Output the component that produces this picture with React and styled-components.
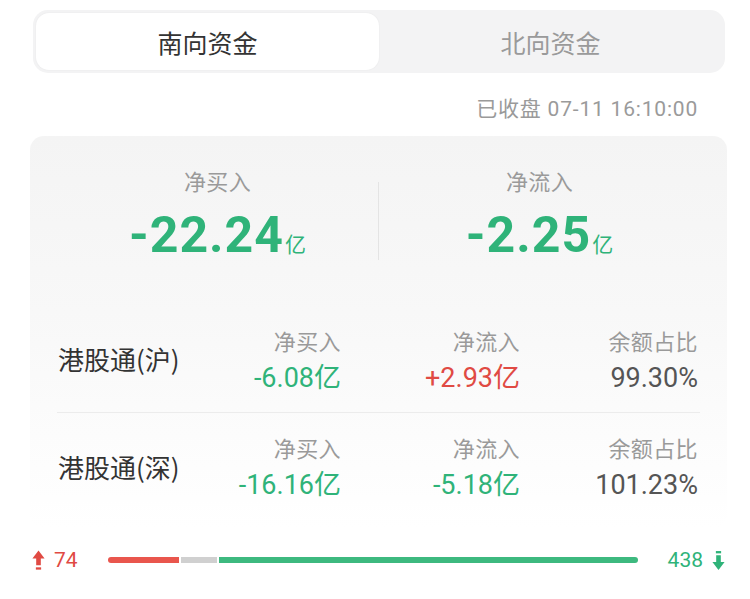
import React from "react";
import styled, { createGlobalStyle } from "styled-components";

const GREEN = "#2fb379";
const RED = "#e04a43";

const Global = createGlobalStyle`
  html, body { margin: 0; padding: 0; background: #fff; }
  body { font-family: Roboto, "Noto Sans CJK SC", sans-serif; }
`;

const Page = styled.div`
  width: 750px;
  height: 599px;
  box-sizing: border-box;
  padding: 10px 23px 0 30px;
  display: flex;
  flex-direction: column;
  overflow: hidden;
`;

const Tabs = styled.div`
  margin: 0 2px 0 3px;
  height: 63px;
  box-sizing: border-box;
  padding: 3px;
  border-radius: 15px;
  background: #f3f3f4;
  display: flex;
`;

const Tab = styled.div`
  flex: 1;
  display: flex;
  align-items: center;
  justify-content: center;
  border-radius: 13px;
  font-family: "Noto Sans CJK SC", sans-serif;
  font-size: 25px;
  color: ${(p) => (p.$active ? "#333" : "#9a9a9a")};
  background: ${(p) => (p.$active ? "#fff" : "transparent")};
  box-shadow: ${(p) => (p.$active ? "0 0 2px rgba(0,0,0,0.06)" : "none")};
`;

const Stamp = styled.div`
  margin-top: 21px;
  padding-right: 29px;
  text-align: right;
  font-size: 21px;
  line-height: 30px;
  letter-spacing: 0.8px;
  color: #9a9a9a;
  font-family: Roboto, "Noto Sans CJK SC", sans-serif;
`;

const Card = styled.div`
  margin-top: 12px;
  border-radius: 14px;
  background: linear-gradient(180deg, #f4f4f4 0%, #f8f8f8 45%, #ffffff 100%);
  padding: 0 27px;
  height: 393px;
  box-sizing: border-box;
`;

const Summary = styled.div`
  display: flex;
  align-items: center;
  padding: 29px 0 42px;
`;

const SumCol = styled.div`
  flex: 1;
  display: flex;
  flex-direction: column;
  align-items: center;
`;

const VDivider = styled.div`
  width: 1px;
  height: 78px;
  background: #e4e4e4;
  margin-top: 14px;
`;

const Label = styled.div`
  font-family: "Noto Sans CJK SC", sans-serif;
  font-size: 22px;
  line-height: 30px;
  letter-spacing: 0.4px;
  color: #9a9a9a;
`;

const BigNum = styled.div`
  margin-top: 12px;
  font-family: Roboto, sans-serif;
  font-weight: 700;
  font-size: 50px;
  line-height: 56px;
  letter-spacing: 1px;
  color: ${GREEN};
  span {
    font-family: "Noto Sans CJK SC", sans-serif;
    font-weight: 400;
    font-size: 21px;
    line-height: 1;
    letter-spacing: 0;
    margin-left: 1px;
  }
`;

const Row = styled.div`
  display: grid;
  grid-template-columns: minmax(0, 1fr) 179px 179px 178px;
  align-items: center;
  height: 107px;
  box-sizing: border-box;
  padding: 0 2px 0 1px;
  border-top: ${(p) => (p.$divider ? "1px solid #ececec" : "none")};
`;

const Name = styled.div`
  font-family: "Noto Sans CJK SC", sans-serif;
  font-size: 26px;
  color: #333;
  white-space: nowrap;
`;

const Cell = styled.div`
  display: flex;
  flex-direction: column;
  align-items: flex-end;
  gap: 8px;
`;

const Value = styled.div`
  font-family: Roboto, "Noto Sans CJK SC", sans-serif;
  font-size: 27px;
  line-height: 30px;
  white-space: nowrap;
  color: ${(p) => p.$color};
`;

const BarRow = styled.div`
  display: flex;
  align-items: center;
  margin-top: 17px;
  padding: 0 2px 0 2px;
  height: 28px;
`;

const Count = styled.div`
  display: flex;
  align-items: center;
  gap: 9px;
  font-family: Roboto, sans-serif;
  font-size: 21px;
  color: ${(p) => p.$color};
  width: ${(p) => p.$w}px;
  justify-content: ${(p) => (p.$end ? "flex-end" : "flex-start")};
`;

const Bar = styled.div`
  flex: 1;
  display: flex;
  gap: 2px;
  height: 6px;
  margin: 0 23px 0 0;
`;

const Seg = styled.div`
  height: 100%;
  background: ${(p) => p.$color};
  border-radius: ${(p) => (p.$first ? "3px 0 0 3px" : p.$last ? "0 3px 3px 0" : "0")};
`;

const UpIcon = () => (
  <svg width="13" height="21" viewBox="0 0 12 20">
    <path d="M6 0.5 L11.8 8 L8.2 8 L8.2 14.5 L3.8 14.5 L3.8 8 L0.2 8 Z" fill={RED} />
    <rect x="3.5" y="16.5" width="5" height="2.2" fill={RED} />
  </svg>
);

const DownIcon = () => (
  <svg width="13" height="21" viewBox="0 0 12 20">
    <rect x="3.5" y="1" width="5" height="2.2" fill={GREEN} />
    <path d="M3.8 5 L8.2 5 L8.2 11.5 L11.8 11.5 L6 19 L0.2 11.5 L3.8 11.5 Z" fill={GREEN} />
  </svg>
);

const rows = [
  { name: "港股通(沪)", buy: "-6.08亿", flow: "+2.93亿", ratio: "99.30%" },
  { name: "港股通(深)", buy: "-16.16亿", flow: "-5.18亿", ratio: "101.23%" },
];

const colorOf = (v) => (v.startsWith("+") ? RED : GREEN);

export default function App() {
  const up = 74;
  const flat = 37;
  const down = 438;
  return (
    <>
      <Global />
      <Page>
        <Tabs>
          <Tab $active>南向资金</Tab>
          <Tab>北向资金</Tab>
        </Tabs>
        <Stamp>已收盘 07-11 16:10:00</Stamp>
        <Card>
          <Summary>
            <SumCol>
              <Label>净买入</Label>
              <BigNum>
                -22.24<span>亿</span>
              </BigNum>
            </SumCol>
            <VDivider />
            <SumCol>
              <Label>净流入</Label>
              <BigNum>
                -2.25<span>亿</span>
              </BigNum>
            </SumCol>
          </Summary>
          {rows.map((r, i) => (
            <Row key={r.name} $divider={i > 0}>
              <Name>{r.name}</Name>
              <Cell>
                <Label>净买入</Label>
                <Value $color={colorOf(r.buy)}>{r.buy}</Value>
              </Cell>
              <Cell>
                <Label>净流入</Label>
                <Value $color={colorOf(r.flow)}>{r.flow}</Value>
              </Cell>
              <Cell>
                <Label>余额占比</Label>
                <Value $color="#555">{r.ratio}</Value>
              </Cell>
            </Row>
          ))}
        </Card>
        <BarRow>
          <Count $color={RED} $w={76}>
            <UpIcon />
            {up}
          </Count>
          <Bar>
            <Seg $first $color="#e9564d" style={{ flexGrow: up }} />
            <Seg $color="#d0d0d0" style={{ flexGrow: flat }} />
            <Seg $last $color="#3db97f" style={{ flexGrow: down * 0.99 }} />
          </Bar>
          <Count $color={GREEN} $w={64} $end>
            {down}
            <DownIcon />
          </Count>
        </BarRow>
      </Page>
    </>
  );
}
